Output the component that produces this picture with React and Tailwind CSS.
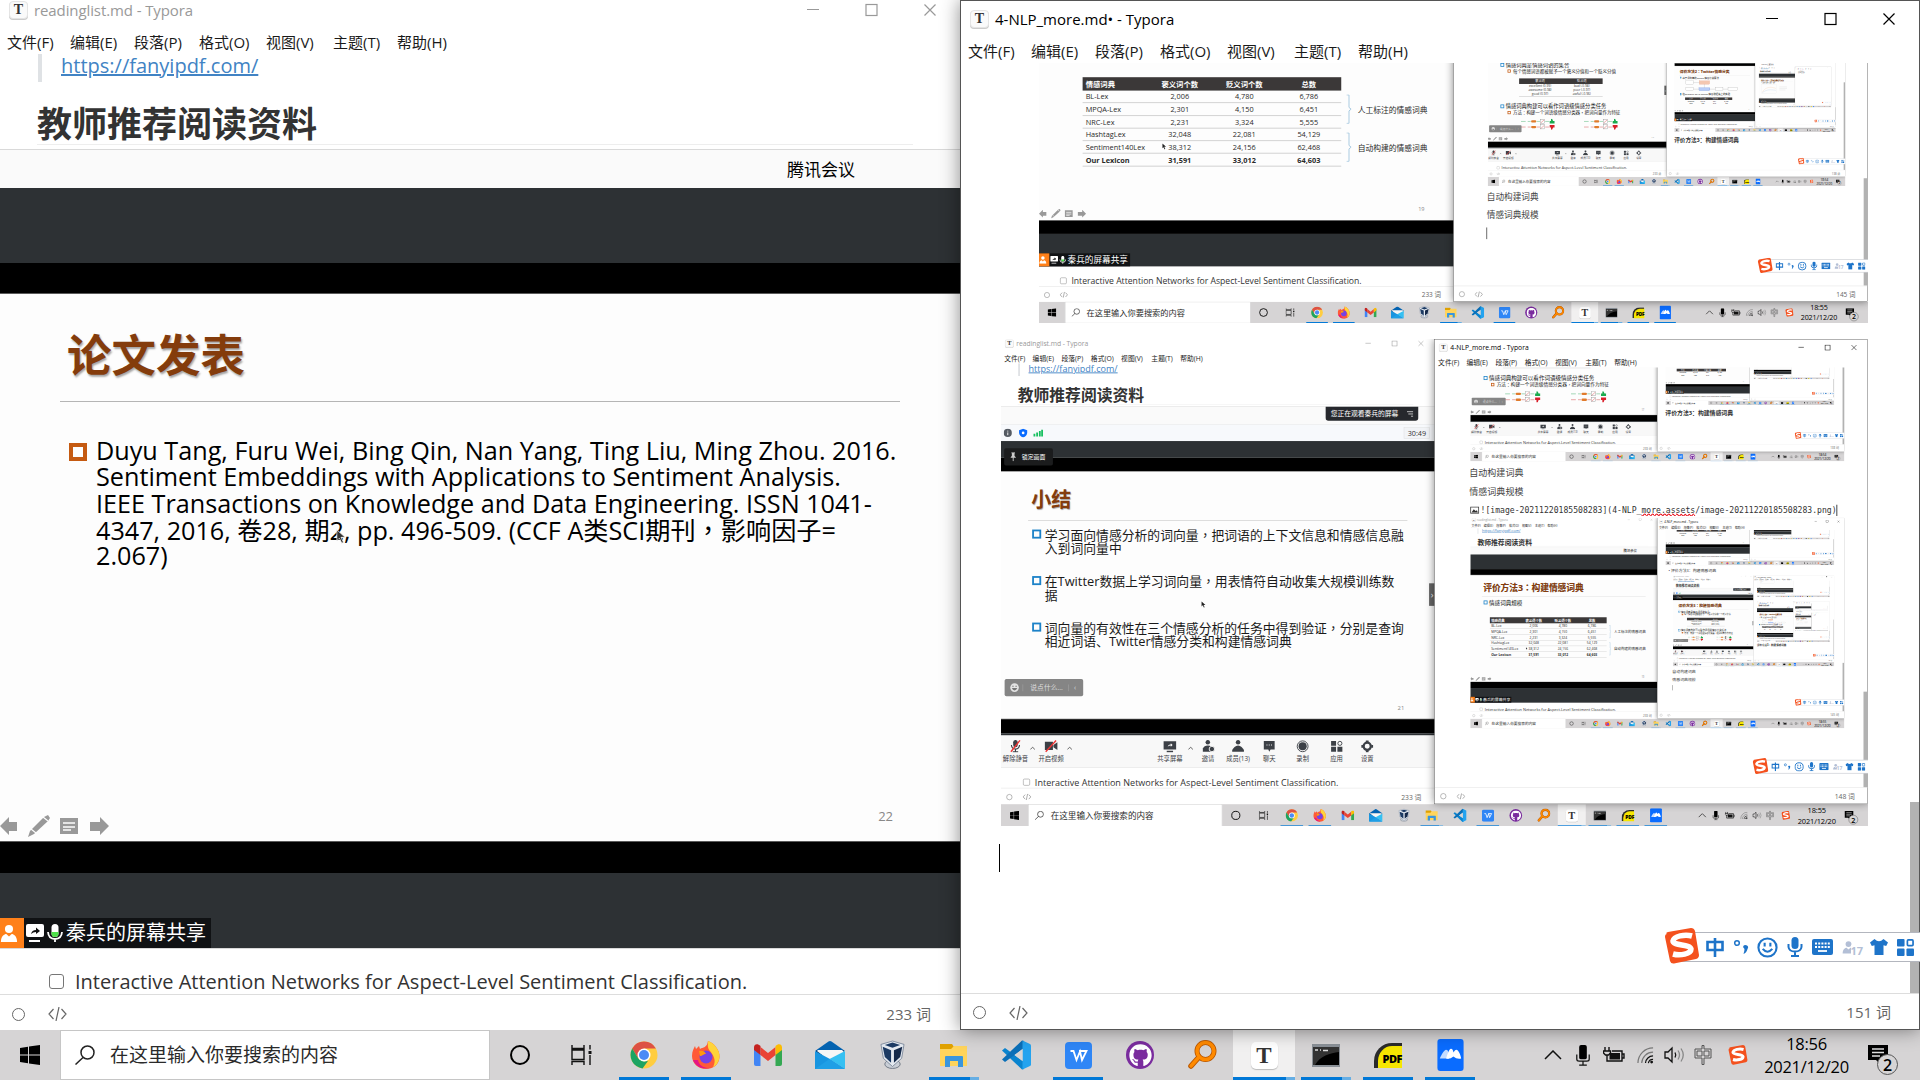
import React from "react";
import { FaGithub } from "react-icons/fa";

/* ---------- small shared icons ---------- */

const TyporaIcon = ({ big }) => (
  <div
    className={
      big
        ? "flex h-[27px] w-[27px] items-center justify-center rounded-[5px] bg-white font-['Liberation_Serif',serif] text-[23px] leading-none font-bold text-[#333] shadow-[0_1px_1px_#bbb]"
        : "flex h-[18px] w-[19px] items-center justify-center rounded-[4px] border border-[#e4e4e4] bg-[#fafafa] font-['Liberation_Serif',serif] text-[14px] leading-none font-bold text-[#333] shadow-[0_1px_0_#ccc]"
    }
  >
    T
  </div>
);

const SogouLogo = ({ className }) => (
  <svg viewBox="0 0 36 36" className={className}>
    <path d="M3 6 Q1 5 4 4 L27 0 Q30 0 31 3 L35 27 Q35 30 32 31 L10 35.500 Q7 36 6 33 L1 9 Q1 6 3 6Z" fill="#f4511e" />
    <path d="M28 8 C21 6 10 8 9 13 C9 18 26 16 27 21 C27 26 16 28 9 26" fill="none" stroke="#fff" strokeWidth="5.500" />
  </svg>
);

const PersonIcon = ({ className }) => (
  <svg viewBox="0 0 20 20" className={className} fill="currentColor">
    <circle cx="10" cy="5.500" r="4.500" />
    <path d="M1 20 C1 13 5 11 7 11 L10 14 L13 11 C15 11 19 13 19 20Z" />
  </svg>
);

const ChromeIcon = () => (
  <svg viewBox="0 0 28 28" className="h-7 w-7">
    <circle cx="14" cy="14" r="13.500" fill="#ffcd40" />
    <path d="M14 .500 A13.500 13.500 0 0 1 25.900 7.500 L14 7.500 L8 17 L2.200 7.500 A13.500 13.500 0 0 1 14 .500Z" fill="#dd5144" />
    <path d="M2.200 7.500 L8.300 17.500 L14 20.500 L18 20 L12.500 27.400 A13.500 13.500 0 0 1 2.200 7.500Z" fill="#1da462" />
    <circle cx="14" cy="14" r="6.500" fill="#fff" />
    <circle cx="14" cy="14" r="5" fill="#4c8bf5" />
  </svg>
);
const FirefoxIcon = () => (
  <svg viewBox="0 0 30 30" className="h-[30px] w-[30px]">
    <path d="M17 1 C23 3 29 10 28.500 17 C28 25 22 29 15 29 C7 29 1 23 1 16 C1 11 3 8 4 6 L5 9 L8 6 L9 9 C12 7 16 8 17 1Z" fill="#ff5a36" />
    <path d="M17 1 C23 3 29 10 28.500 17 C28 22 25 26 22 27 C26 20 22 15 19 11 C16 8 17 4 17 1Z" fill="#ffd43a" />
    <path d="M2 20 C5 27 12 30 20 27.500 C14 29 8 26 7 20Z" fill="#e31587" />
    <circle cx="15" cy="17" r="6.500" fill="#7542e5" />
    <path d="M8 11 C11 10 14 11 15 14 C12 14 12 16 9 16Z" fill="#ff980e" />
  </svg>
);
const GmailIcon = () => (
  <svg viewBox="0 0 28 22" className="h-[22px] w-7">
    <path d="M0 3 V20 Q0 22 2 22 H6.500 V10Z" fill="#4285f4" />
    <path d="M28 3 V20 Q28 22 26 22 H21.500 V10Z" fill="#34a853" />
    <path d="M6.500 3 L14 9 L21.500 3 V11 L14 17 L6.500 11Z" fill="#ea4335" />
    <path d="M0 3.500 C0 0 3.500 -1 6.500 2 V11 L0 6Z" fill="#c5221f" />
    <path d="M28 3.500 C28 0 24.500 -1 21.500 2 V11 L28 6Z" fill="#fbbc04" />
  </svg>
);
const MailIcon = () => (
  <svg viewBox="0 0 30 28" className="h-7 w-[30px]">
    <path d="M0 10 L13.500 .500 Q15 -.500 16.500 .500 L30 10Z" fill="#0362b0" />
    <path d="M1 9.500 H29 V14 H1Z" fill="#083f75" />
    <path d="M3 9 H27 L30 12 L15 20 L2 10Z" fill="#f6f6f6" />
    <path d="M0 10 L14 17.500 L30 28 H0Z" fill="#1895e0" />
    <path d="M30 10 V28 L14.500 18Z" fill="#35c0f2" />
    <path d="M0 28 L14.500 18 L30 28Z" fill="#1f9fe6" />
  </svg>
);
const VBoxIcon = () => (
  <svg viewBox="0 0 26 30" className="-mt-[1px] h-[29px] w-[25px]">
    <ellipse cx="13" cy="25" rx="8" ry="4.500" fill="#c9ced6" stroke="#6f7885" />
    <path d="M13 1 L25 4.500 L22.500 19 L13 27.500 L3.500 19 L1 4.500Z" fill="#e4e9f0" stroke="#6b7a8f" strokeWidth=".8" />
    <path d="M13 2.500 L21 5 L13 8 L5 5Z" fill="#1c3a63" />
    <path d="M2.800 7 L11.500 10.500 V23.500 L5 17.500Z" fill="#1c3a63" />
    <path d="M23.200 7 L14.500 10.500 V23.500 L21 17.500Z" fill="#14294a" />
  </svg>
);
const FolderIcon = () => (
  <svg viewBox="0 0 28 24" className="h-6 w-7">
    <path d="M0 1 H12 L14 4 V8 H0Z" fill="#e0a100" />
    <path d="M0 6 H11 L14 3 H27 V23 H0Z" fill="#ffd45c" />
    <path d="M5 24 V14 Q5 13 6 13 H22 Q23 13 23 14 V24 H18 V18 H10 V24Z" fill="#3a96dd" />
  </svg>
);
const VSCodeIcon = () => (
  <svg viewBox="0 0 30 30" className="h-[30px] w-[30px]">
    <path d="M1 10.500 L4 8 L23 22 V29 L21 29.500Z" fill="#0a84cf" />
    <path d="M1 19.500 L4 22 L23 8 V1 L21 .500Z" fill="#0a6fb8" />
    <path d="M21.500 .500 L29 4 Q30 4.500 30 5.500 V24.500 Q30 25.500 29 26 L21.500 29.500Z" fill="#24a3ef" />
    <path d="M21.500 9 L13.500 15 L21.500 21Z" fill="#d6d5d6" />
  </svg>
);
const WpsIcon = () => (
  <svg viewBox="0 0 27 27" className="h-[27px] w-[27px]">
    <rect width="27" height="27" rx="4" fill="#2f86f6" />
    <path d="M5.500 9 H8.500 L11.500 18 L15 9.500 L17 18 L21.500 9 H14" stroke="#fff" strokeWidth="1.800" fill="none" />
  </svg>
);
const GithubIcon = () => (
  <div className="flex h-7 w-7 items-center justify-center rounded-full bg-[#7a2c9e]">
    <FaGithub className="h-[23px] w-[23px] text-white" />
  </div>
);
const EverythingIcon = () => (
  <svg viewBox="0 0 30 30" className="h-[30px] w-[30px]">
    <path d="M12 17 L4 26" stroke="#b85600" strokeWidth="5.500" strokeLinecap="round" />
    <circle cx="18.500" cy="11" r="8.500" fill="none" stroke="#b85600" strokeWidth="5" />
    <path d="M12 17 L4 26" stroke="#ff8a00" strokeWidth="3.500" strokeLinecap="round" />
    <circle cx="18.500" cy="11" r="8.500" fill="none" stroke="#ff8a00" strokeWidth="3.500" />
  </svg>
);
const TerminalIcon = () => (
  <svg viewBox="0 0 28 23" className="h-[23px] w-7">
    <rect width="28" height="23" fill="#8a9097" />
    <rect x="1" y="3" width="26" height="18" fill="#000" />
    <path d="M1 3 H27 V8 C18 9 8 12 3 21 H1Z" fill="#333" />
    <path d="M3 6 h3 M8 6 h1 M11 6.500 h5" stroke="#ddd" strokeWidth="1.500" />
  </svg>
);
const PdfIcon = () => (
  <div className="flex h-[25px] w-7 items-end justify-end rounded-tl-[18px] border-t-[3px] border-l-[4px] border-[#2b2b2b] bg-[#f6e600]">
    <span className="mb-[2px] font-['Open_Sans',sans-serif] text-[11px] leading-[14px] font-extrabold tracking-[-0.5px] text-black">PDF</span>
  </div>
);
const TencentIcon = () => (
  <svg viewBox="0 0 27 33" className="h-[32px] w-[27px]">
    <rect width="27" height="33" rx="3" fill="#0a6cff" />
    <path d="M2.500 20 C3.500 17 7 11 9 11 C11 11 12 14 12 20 Z" fill="#c5dcff" />
    <path d="M9 20 C10 17 12 10 14 10 C15.500 10 16.500 12 16.500 14 C17.500 12 18.500 11 19.500 11 C21.500 11 24 16 24.500 20 Q20 21 16.500 18 Q13 21 9 20Z" fill="#fff" />
  </svg>
);

/* ---------- taskbar ---------- */

const apps = [
  { id: "chrome", icon: <ChromeIcon />, run: 1 },
  { id: "firefox", icon: <FirefoxIcon />, run: 1 },
  { id: "gmail", icon: <GmailIcon /> },
  { id: "mail", icon: <MailIcon /> },
  { id: "vbox", icon: <VBoxIcon /> },
  { id: "files", icon: <FolderIcon />, run: 2 },
  { id: "code", icon: <VSCodeIcon /> },
  { id: "wps", icon: <WpsIcon />, run: 1 },
  { id: "github", icon: <GithubIcon /> },
  { id: "search", icon: <EverythingIcon /> },
  { id: "typora", icon: <TyporaIcon big />, run: 3 },
  { id: "terminal", icon: <TerminalIcon />, run: 2 },
  { id: "pdf", icon: <PdfIcon />, run: 1 },
  { id: "meeting", icon: <TencentIcon />, run: 1 },
];

const Taskbar = ({ time }) => (
  <div className="flex h-[50px] w-[1920px] bg-[#d6d4d5] text-black">
    <div className="flex w-[60px] items-center justify-center">
      <svg viewBox="0 0 20 20" className="h-5 w-5">
        <path d="M0 3 L8 1.800 V9.500 H0Z M9 1.600 L20 0 V9.500 H9Z M0 10.500 H8 V18.200 L0 17Z M9 10.500 H20 V20 L9 18.400Z" />
      </svg>
    </div>
    <div className="flex h-[50px] w-[430px] items-center border border-[#c6c6c6] bg-white pl-[14px]">
      <svg viewBox="0 0 20 20" className="h-5 w-5" fill="none" stroke="#222" strokeWidth="1.500">
        <circle cx="12.500" cy="7.500" r="6.500" />
        <path d="M8 12.500 L.500 19.500" />
      </svg>
      <span className="ml-[15px] text-[19px] leading-none text-[#2a2a2a]">在这里输入你要搜索的内容</span>
    </div>
    <div className="flex w-[60px] items-center justify-center">
      <div className="h-5 w-5 rounded-full border-[2.5px] border-black" />
    </div>
    <div className="flex w-[63px] items-center justify-center">
      <svg viewBox="0 0 22 20" className="h-5 w-[22px]" fill="none" stroke="#111" strokeWidth="1.400">
        <path d="M1 0 V3.500 H13 V0 M1 5 H13 V14.500 H1Z M1 20 V16.500 H13 V20 M19 0 V4.500 M19 10 V20" />
        <path d="M17.500 7.500 H20.500" strokeWidth="3" />
      </svg>
    </div>
    {apps.map((a) => (
      <div
        key={a.id}
        className={
          a.run === 3
            ? "flex h-[50px] w-[62px] flex-col bg-[#f1f0f0]"
            : "flex h-[50px] w-[62px] flex-col"
        }
      >
        <div className="flex h-[47px] items-center justify-center pt-[3px]">{a.icon}</div>
        {a.run && (
          <div className={a.run === 3 ? "flex h-[3px]" : "mx-[6px] flex h-[3px]"}>
            <div className="flex-1 bg-[#0078d7]" />
            {a.run > 1 && <div className="w-[9px] bg-[#66aee4]" />}
          </div>
        )}
      </div>
    ))}
    <div className="ml-[59px] flex h-[50px] flex-1 items-center">
      <svg viewBox="0 0 18 10" className="h-[10px] w-[26px]" fill="none" stroke="#111" strokeWidth="1.500">
        <path d="M1 9 L9 1 L17 9" />
      </svg>
      <svg viewBox="0 0 16 22" className="ml-[9px] h-[21px] w-4">
        <rect x="4" y="0" width="8" height="15" rx="2" />
        <path d="M1.500 10 V15 Q1.500 17 4 17 H12 Q14.500 17 14.500 15 V10 M8 17 V21 M4 21 H12" fill="none" stroke="#111" strokeWidth="1.300" />
      </svg>
      <svg viewBox="0 0 22 16" className="ml-3 h-4 w-[22px]" fill="none" stroke="#111" strokeWidth="1.400">
        <path d="M2 0 V4 M6 0 V4 M0.500 4 H7.500 V6 L5.500 8 H2.500 L.500 6Z M4 8 V14 H19 V4 H9 M19 7 H21 V11 H19" />
        <rect x="6.500" y="6" width="10.500" height="6.500" fill="#111" stroke="none" />
      </svg>
      <svg viewBox="0 0 18 18" className="ml-3 h-[17px] w-[17px]" fill="none" stroke="#777" strokeWidth="1.300">
        <path d="M1 17 A16 16 0 0 1 17 1 M5 17 A12 12 0 0 1 17 5.500" />
        <path d="M9 17 A8 8 0 0 1 17 9.500 M12 17 A5 5 0 0 1 17 13" stroke="#111" />
        <circle cx="15.500" cy="16" r="1.500" fill="#111" stroke="none" />
      </svg>
      <svg viewBox="0 0 21 18" className="ml-[10px] h-[18px] w-[21px]" fill="none" stroke="#111" strokeWidth="1.300">
        <path d="M1 6 H4 L8 2 V16 L4 12 H1Z M11 6.500 Q12.500 9 11 11.500" />
        <path d="M14 4.500 Q17 9 14 13.500 M17 2.500 Q21.500 9 17 15.500" stroke="#888" />
      </svg>
      <svg viewBox="0 0 18 20" className="ml-[9px] h-[22px] w-[18px]" fill="none" stroke="#555" strokeWidth="1">
        <path d="M1 4 H8 V.500 H10 V4 H17 V13 H10 V19.500 H8 V13 H1Z M3 6 H8 V11 H3Z M10 6 H15 V11 H10Z" />
      </svg>
      <SogouLogo className="ml-[16px] h-5 w-5" />
      <div className="ml-[12px] flex w-[93px] flex-col items-center text-[16.500px] leading-[23px] tracking-[-0.3px] whitespace-nowrap">
        <span>{time}</span>
        <span>2021/12/20</span>
      </div>
      <div className="relative ml-[15px] h-[50px] w-8">
        <svg viewBox="0 0 20 21" className="mt-[15px] h-[21px] w-5">
          <path d="M0 0 H20 V15 H13 L13 20 L8 15 H0Z" />
          <path d="M4 4 H16 M4 7.500 H16 M4 11 H12" stroke="#ddd" strokeWidth="1.300" />
        </svg>
        <div className="absolute top-[24px] left-[9px] flex h-[21px] w-[21px] items-center justify-center rounded-full border border-[#555] bg-[#d6d4d5] text-[16px] leading-none font-semibold">
          2
        </div>
      </div>
    </div>
  </div>
);

/* ---------- Sogou input bar ---------- */

const ImeBar = () => (
  <div className="absolute top-[928px] left-[1664px] flex h-[36px] w-[256px] items-center">
    <div className="absolute top-[4px] right-0 h-[30px] w-[240px] border-y border-[#b3b6be] bg-white" />
    <SogouLogo className="relative h-[36px] w-[36px]" />
    <div className="relative flex flex-1 items-center justify-between pt-[2px] pr-[6px] pl-[6px] text-[#1e74c9]">
      <svg viewBox="0 0 18 20" className="h-5 w-[18px]" fill="none" stroke="currentColor" strokeWidth="2.600">
        <path d="M1.500 5 H16.500 V13 H1.500Z M9 1 V20" />
      </svg>
      <svg viewBox="0 0 16 18" className="h-[18px] w-4" fill="currentColor">
        <circle cx="4" cy="5" r="2.300" fill="none" stroke="currentColor" strokeWidth="1.500" />
        <path d="M10 9 a2.500 2.500 0 1 1 4.500 2 q-1 4 -4 5 q1 -3 1 -5Z" />
      </svg>
      <svg viewBox="0 0 22 22" className="h-[21px] w-[21px]" fill="none" stroke="currentColor" strokeWidth="2.200">
        <circle cx="11" cy="11" r="9.500" />
        <path d="M6 12.500 Q11 18.500 16 12.500 M8 6 V10 M14 6 V10" />
      </svg>
      <svg viewBox="0 0 16 20" className="h-5 w-4" fill="currentColor">
        <rect x="4.500" y="0" width="7" height="12" rx="3.500" />
        <path d="M1.500 7 V10 Q2 14.500 8 14.500 Q14 14.500 14.500 10 V7 M8 14 V19 M4 19 H12" fill="none" stroke="currentColor" strokeWidth="2" />
      </svg>
      <svg viewBox="0 0 21 16" className="h-4 w-[21px]">
        <rect width="21" height="16" rx="2" fill="currentColor" />
        <path d="M3 4.500 H18 M3 8 H18" stroke="#fff" strokeWidth="2" strokeDasharray="2 1.200" />
        <path d="M6 12 H15" stroke="#fff" strokeWidth="1.800" />
      </svg>
      <div className="flex w-5 items-end text-[#b3bfd6]">
        <PersonIcon className="h-[18px] w-[13px] shrink-0" />
        <span className="-ml-[4px] bg-white text-[11px] leading-none font-bold">17</span>
      </div>
      <svg viewBox="0 0 20 18" className="h-[18px] w-[18px]" fill="currentColor">
        <path d="M5 0 Q10 5 15 0 L20 4 L18 8 L15 7 V18 H5 V7 L2 8 L0 4Z" />
      </svg>
      <svg viewBox="0 0 18 18" className="h-[17px] w-[17px]" fill="currentColor">
        <rect width="8" height="8" rx="1" />
        <rect y="10" width="8" height="8" rx="1" />
        <rect x="10" y="10" width="8" height="8" rx="1" />
        <rect x="11" y="1" width="6" height="6" rx="1" fill="none" stroke="currentColor" strokeWidth="1.800" />
      </svg>
    </div>
  </div>
);

/* ---------- window furniture ---------- */

const WindowButtons = ({ className }) => (
  <svg viewBox="0 0 132 14" className={className} fill="none" stroke="currentColor" strokeWidth="1.200">
    <path d="M1 6.500 H13 M118.500 1.500 L129.500 12.500 M129.500 1.500 L118.500 12.500" />
    <rect x="60" y="1.500" width="11" height="11" />
  </svg>
);

const MenuBar = () => (
  <div className="flex text-[15px] leading-5 whitespace-nowrap text-[#1a1a1a]">
    <span className="w-[63px]">文件(F)</span>
    <span className="w-[64px]">编辑(E)</span>
    <span className="w-[65px]">段落(P)</span>
    <span className="w-[67px]">格式(O)</span>
    <span className="w-[67px]">视图(V)</span>
    <span className="w-[64px]">主题(T)</span>
    <span>帮助(H)</span>
  </div>
);

const StatusBar = ({ words, className }) => (
  <div className={className}>
    <div className="h-[13px] w-[13px] rounded-full border border-[#666]" />
    <svg viewBox="0 0 19 14" className="ml-[23px] h-[14px] w-[19px]" fill="none" stroke="#666" strokeWidth="1.200">
      <path d="M5.500 2 L1 7 L5.500 12 M13.500 2 L18 7 L13.500 12 M11 0 L8 14" />
    </svg>
    <span className="ml-auto text-[15px] leading-none text-[#666]">{words} 词</span>
  </div>
);

/* ---------- slides ---------- */

/* Sets full-width commas and colons in the middle of their cell. */
const Mid = ({ children }) =>
  children.split(/([，：])/).map((part, i) =>
    i % 2 ? (
      <span key={i} lang="zh-TW" className="font-['Noto_Sans_CJK_TC',sans-serif]">
        {part}
      </span>
    ) : (
      part
    ),
  );

const Slide = ({ title, page, hideNav, children }) => (
  <div className="flex h-[549px] flex-col border-y border-[#5a5a5a] bg-[#fdfdfd]">
    <div className="h-[107px] pt-[39px] pl-[67px] text-[44.500px] leading-[44px] font-bold whitespace-nowrap text-[#843c0c] [text-shadow:1px_2px_2px_rgba(0,0,0,.35)]">
      <Mid>{title}</Mid>
    </div>
    <div className="ml-[60px] h-px w-[840px] bg-[#b5b5b5]" />
    <div className="flex-1 pl-[69px]">{children}</div>
    <div className="flex h-[40px]">
      <div className={hideNav ? "invisible" : "flex h-[50px] items-center text-[#999]"}>
        <svg viewBox="0 0 110 22" className="h-[22px] w-[110px]" fill="currentColor">
          <path d="M0 11 L9 2 V7 H17 V16 H9 V20Z" />
          <path d="M28 22 L30 16 L44 2 L48 0 L50 3 L48 6 L34 19Z" />
          <path d="M31 14 L36 18 M43 2 L48 6" stroke="#fdfdfd" strokeWidth="1.200" />
          <path d="M60 3 H78 V19 H60Z" />
          <path d="M63 8 H75 M63 12 H75 M63 15 H71" stroke="#fdfdfd" strokeWidth="1.600" />
          <path d="M109 11 L100 2 V7 H90 V16 H100 V20Z" />
        </svg>
      </div>
      <span className="mt-[7px] mr-[68px] ml-auto text-[13px] leading-4 text-[#888]">{page}</span>
    </div>
  </div>
);

const Box = ({ orange, small }) => (
  <div
    className={
      (small ? "mt-[6px] mr-3 h-[17px] w-[17px] border-4 " : "mt-[5px] mr-[8px] h-5 w-5 border-[4.5px] ") +
      "shrink-0 " +
      (orange ? "border-[#c55a11]" : "border-[#1c82c8]")
    }
  />
);

const Bullet = ({ lines, className }) => (
  <div className={"flex " + className}>
    <Box />
    <div className="text-[28.400px] leading-[31px] whitespace-nowrap text-[#1a1a1a]">
      {lines.map((l) => (
        <div key={l} className="h-[31px]">
          <Mid>{l}</Mid>
        </div>
      ))}
    </div>
  </div>
);

const SubBullet = ({ text, className }) => (
  <div className={"flex pl-[38px] text-[24px] leading-[28px] whitespace-nowrap text-[#1a1a1a] " + className}>
    <Box orange small />
    <div className="h-[28px]">
      <Mid>{text}</Mid>
    </div>
  </div>
);

const citation = [
  "Duyu Tang, Furu Wei, Bing Qin, Nan Yang, Ting Liu, Ming Zhou. 2016.",
  "Sentiment Embeddings with Applications to Sentiment Analysis.",
  "IEEE Transactions on Knowledge and Data Engineering. ISSN 1041-",
  "4347, 2016, 卷28, 期2, pp. 496-509. (CCF A类SCI期刊，影响因子=",
  "2.067)",
];

const PaperSlide = () => (
  <Slide title="论文发表" page="22">
    <div className="flex pt-[35px]">
      <div className="mt-[6px] mr-[9px] h-[18px] w-[18px] shrink-0 border-4 border-[#c55a11]" />
      <div className="text-[25.200px] leading-[26.300px] whitespace-nowrap text-black">
        {citation.map((l) => (
          <div key={l} className="h-[26.300px]">
            <Mid>{l}</Mid>
          </div>
        ))}
      </div>
    </div>
  </Slide>
);

const SummarySlide = () => (
  <Slide title="小结" page="21" hideNav>
    <Bullet className="pt-[15px]" lines={["学习面向情感分析的词向量，把词语的上下文信息和情感信息融", "入到词向量中"]} />
    <Bullet className="pt-[41px]" lines={["在Twitter数据上学习词向量，用表情符自动收集大规模训练数", "据"]} />
    <Bullet className="pt-[41px]" lines={["词向量的有效性在三个情感分析的任务中得到验证，分别是查询", "相近词语、Twitter情感分类和构建情感词典"]} />
  </Slide>
);

const lexicons = [
  ["BL-Lex", "2,006", "4,780", "6,786"],
  ["MPQA-Lex", "2,301", "4,150", "6,451"],
  ["NRC-Lex", "2,231", "3,324", "5,555"],
  ["HashtagLex", "32,048", "22,081", "54,129"],
  ["Sentiment140Lex", "38,312", "24,156", "62,468"],
  ["Our Lexicon", "31,591", "33,012", "64,603"],
];

const Brace = () => (
  <svg viewBox="0 0 12 68" className="h-[68px] w-3" fill="none" stroke="#9cc3dc" strokeWidth="2">
    <path d="M0 1 H6 V30 L11 34 L6 38 V67 H0" />
  </svg>
);

const LexiconSizeSlide = () => (
  <Slide title="评价方法3：构建情感词典" page="19">
    <Bullet className="pt-[17px]" lines={["情感词典规模"]} />
    <div className="mt-[60px] ml-[32px] flex">
      <div className="w-[599px] text-[17px] leading-none text-[#2a2a2a]">
        <div className="grid h-[31px] grid-cols-[150px_150px_149px_150px] items-center bg-[#3b3838] text-center font-bold text-white">
          <span className="pl-[7px] text-left">情感词典</span>
          <span>褒义词个数</span>
          <span>贬义词个数</span>
          <span>总数</span>
        </div>
        {lexicons.map((r, i) => (
          <div
            key={r[0]}
            className={
              "grid h-[29.300px] grid-cols-[150px_150px_149px_150px] items-center border-b-2 border-[#ccc] text-center " +
              (i === 5 ? "font-bold" : "")
            }
          >
            <span className="pl-[7px] text-left">{r[0]}</span>
            <span className="relative">
              {r[1]}
              {i === 4 && (
                <svg viewBox="0 0 12 18" className="absolute top-0 left-[34px] h-[15px] w-[10px]">
                  <path d="M1 1 V14 L4 11 L7 17 L9 16 L6 10 H11Z" fill="#222" />
                </svg>
              )}
            </span>
            <span>{r[2]}</span>
            <span>{r[3]}</span>
          </div>
        ))}
      </div>
      <div className="ml-[12px] flex flex-col gap-[20px] pt-[40px]">
        <Brace />
        <Brace />
      </div>
      <div className="ml-[14px] flex flex-col gap-[70px] pt-[66px] text-[18px] leading-[18px] whitespace-nowrap text-[#2a2a2a]">
        <span>人工标注的情感词典</span>
        <span>自动构建的情感词典</span>
      </div>
    </div>
  </Slide>
);

const Flow = () => (
  <svg viewBox="0 0 190 58" className="h-[58px] w-[190px]" fill="none" strokeWidth="2">
    {[14, 44].map((y, i) => (
      <g key={y}>
        <path d={`M0 ${y} H25 M36 ${y} H52 M84 ${y} H102 M130 ${y} H150`} stroke={i ? "#c22" : "#1b9e4b"} />
        <rect x="54" y={y - 6} width="28" height="12" rx="6" fill="#e07b2c" stroke="none" />
        <rect x="104" y={y - 12} width="22" height="22" stroke="#888" />
        <path d={`M106 ${y + 8} L124 ${y - 8}`} stroke="#d33" />
        <path
          d={i ? `M154 ${y - 11} h26 v13 h-8 l-5 12 h-6 v-12 h-7z` : `M154 ${y + 11} h26 v-13 h-8 l-5 -12 h-6 v12 h-7z`}
          fill={i ? "#d91f2a" : "#1bab4f"}
        />
      </g>
    ))}
  </svg>
);

const LexiconTaskSlide = () => (
  <Slide title="评价方法3：构建情感词典" page="17">
    <Bullet className="pt-[13px]" lines={["情感词典是情感词语的集合"]} />
    <SubBullet className="pt-[2px]" text="每个情感词语都被赋予一个褒义分值和一个贬义分值" />
    <div className="mt-[26px] ml-[100px] w-[448px] border-b-2 border-[#aaa] pb-1 text-center text-[17px] leading-[21px] text-[#333]">
      <div className="grid h-[30px] grid-cols-2 items-center bg-[#3b3838] text-white">
        <span>褒义词</span>
        <span>贬义词</span>
      </div>
      <div className="grid grid-cols-2">
        <span>excellent (0.99)</span>
        <span>bad (-0.98)</span>
        <span>awesome (0.98)</span>
        <span>poor (-0.97)</span>
        <span>good (0.97)</span>
        <span>awful (-0.96)</span>
      </div>
    </div>
    <Bullet className="pt-[36px]" lines={["情感词典构建可以看作词语级情感分类任务"]} />
    <SubBullet className="pt-[3px]" text="方法：构建一个词语级情感分类器，把词向量作为特征" />
    <div className="flex gap-[148px] pt-[20px] pl-[110px]">
      <Flow />
      <Flow />
    </div>
  </Slide>
);

const TwitterSlide = () => (
  <Slide title="评价方法2：Twitter情感分类" page="14">
    <Bullet className="pt-[15px]" lines={["基于词向量的Twitter情感分类算法"]} />
    <svg viewBox="0 0 640 130" className="mt-4 ml-[60px] h-[130px] w-[640px]" fill="#fff" stroke="#777" strokeWidth="2">
      <rect x="10" y="5" width="90" height="44" />
      <rect x="170" y="5" width="120" height="40" fill="#f4c7b0" stroke="#d9643a" />
      <rect x="10" y="88" width="90" height="34" />
      <rect x="165" y="88" width="130" height="34" fill="#b9cdf8" stroke="#3763c9" />
      <rect x="360" y="88" width="90" height="34" />
      <rect x="510" y="88" width="110" height="34" />
      <path d="M100 26 H170 M100 105 H165 M230 45 V88 M295 105 H360 M450 105 H510" fill="none" />
    </svg>
    <Bullet className="pt-[22px]" lines={["在SemEval 2013 Twitter情感数据集上的实验"]} />
    <div className="mt-5 ml-[60px] w-[560px] text-center text-[20px] leading-[30px]">
      <div className="grid grid-cols-4 bg-[#3b3838] text-white">
        <span>方法</span>
        <span>正/负类</span>
        <span>三类分类</span>
        <span>总数</span>
      </div>
      <div className="grid grid-cols-4">
        <span>Training</span>
        <span>2,642</span>
        <span>994</span>
        <span>3,436</span>
        <span>Dev</span>
        <span>408</span>
        <span>219</span>
        <span>492</span>
      </div>
    </div>
  </Slide>
);

const CurveSlide = () => (
  <Slide title="评价方法1：查询情感相近词语" page="12">
    <Bullet className="pt-[17px]" lines={["度量词向量与情感的一致性"]} />
    <svg viewBox="0 0 700 280" className="mt-4 h-[280px] w-[700px]" fill="none" stroke="#bbb" strokeWidth="2">
      <rect x="20" y="10" width="380" height="230" />
      <path d="M30 210 C120 60 260 60 390 110" stroke="#e07b2c" strokeWidth="3" />
      <path d="M30 225 C140 130 260 140 390 160" stroke="#3d7ec2" strokeWidth="3" />
      <path d="M480 70 H680 M480 110 H680 M480 150 H640" stroke="#888" strokeWidth="3" />
    </svg>
  </Slide>
);

/* ---------- meeting window ---------- */

const PlainMeeting = ({ slide }) => (
  <div className="h-[800px] shrink-0 border-y border-[#d9d9d9] bg-[#fafafa]">
    <div className="flex h-[38px] items-center pl-[787px] text-[17px] leading-none text-black">腾讯会议</div>
    <div className="h-[75px] bg-[#2d3134]" />
    <div className="h-[30px] bg-black" />
    {slide}
    <div className="h-[31px] bg-black" />
    <div className="flex h-[75px] items-end bg-[#2d3134]">
      <div className="flex h-[30px] w-[211px] items-center bg-[#101214] text-white">
        <div className="flex h-[30px] w-6 items-center bg-[#ff8019]">
          <PersonIcon className="h-[18px] w-[18px]" />
        </div>
        <svg viewBox="0 0 18 18" className="ml-[2px] h-[18px] w-[18px]">
          <rect width="18" height="13" rx="2" fill="#fff" />
          <path d="M3 17 H14" stroke="#fff" strokeWidth="2" />
          <path d="M5 10 Q6 6 10 6 V3.500 L14 7 L10 10 V8 Q7 8 5 10Z" fill="#111" />
        </svg>
        <svg viewBox="0 0 16 19" className="ml-[3px] h-[19px] w-4">
          <rect x="4.500" y="0" width="7" height="13" rx="3.500" fill="#fff" />
          <path d="M4.500 8 H11.500 V9.500 A3.500 3.500 0 0 1 4.500 9.500Z" fill="#4ee04a" />
          <path d="M1 8 Q1.500 15 8 15 Q14.500 15 15 8 M8 15 V18" fill="none" stroke="#fff" strokeWidth="1.800" />
        </svg>
        <span className="ml-[3px] text-[20px] leading-none whitespace-nowrap">秦兵的屏幕共享</span>
      </div>
    </div>
  </div>
);

const ToolItem = ({ label, className, children }) => (
  <div className={"flex shrink-0 flex-col items-center gap-[5px] whitespace-nowrap " + className}>
    <svg viewBox="0 0 30 28" className="h-7 w-[30px]" fill="currentColor">
      {children}
    </svg>
    <span>{label}</span>
  </div>
);

const Caret = () => (
  <svg viewBox="0 0 12 8" className="mt-[14px] h-2 w-3 shrink-0" fill="none" stroke="#444" strokeWidth="1.800">
    <path d="M1 7 L6 2 L11 7" />
  </svg>
);

const MeetingToolbar = () => (
  <div className="flex h-[70px] bg-[#f8f8f8] pt-[10px] text-[14px] leading-[18px] text-[#3c4046]">
    <ToolItem label="解除静音" className="w-[64px]">
      <rect x="10" y="0" width="10" height="16" rx="5" />
      <path d="M6 11 Q7 20 15 20 Q23 20 24 11 M15 20 V26 M9 26 H21" fill="none" stroke="currentColor" strokeWidth="2.500" />
      <path d="M5 26 L25 1" stroke="#e33" strokeWidth="3" />
    </ToolItem>
    <Caret />
    <ToolItem label="开启视频" className="w-[70px]">
      <path d="M1 4 H19 V22 H1Z M20 11 L29 5 V22 L20 16Z" />
      <path d="M3 26 L26 1" stroke="#e33" strokeWidth="3" />
    </ToolItem>
    <Caret />
    <ToolItem label="共享屏幕" className="ml-[176px] w-[80px]">
      <path d="M1 3 H29 V21 H1Z M8 24 H22 V27 H8Z" />
      <path d="M10 15 Q12 9 17 10 V7 L21 11 L17 15 V12 Q13 12 10 15Z" fill="#fff" />
    </ToolItem>
    <Caret />
    <ToolItem label="邀请" className="w-[65px]">
      <circle cx="14" cy="5" r="5" />
      <path d="M3 26 V19 Q6 12 14 12 Q19 12 21 14 V26Z" />
      <circle cx="23" cy="20" r="6" stroke="#f8f8f8" strokeWidth="2" />
    </ToolItem>
    <ToolItem label="成员(13)" className="w-[68px]">
      <circle cx="15" cy="5" r="5" />
      <path d="M2 26 V22 Q6 14 15 12 Q24 14 28 22 V26Z" />
    </ToolItem>
    <ToolItem label="聊天" className="w-[70px]">
      <path d="M3 2 H27 V21 H18 L15 26 L13 21 H3Z" />
      <path d="M9 11 h2 M14 11 h2 M19 11 h2" stroke="#fff" strokeWidth="2.500" />
    </ToolItem>
    <ToolItem label="录制" className="w-[78px]">
      <circle cx="15" cy="14" r="12" fill="none" stroke="currentColor" strokeWidth="2" />
      <circle cx="15" cy="14" r="9" />
    </ToolItem>
    <ToolItem label="应用" className="w-[72px]">
      <path d="M3 2 H14 V13 H3Z M3 15 H14 V26 H3Z M17 15 H28 V26 H17Z" />
      <circle cx="22.500" cy="7.500" r="4.500" fill="none" stroke="currentColor" strokeWidth="2" />
    </ToolItem>
    <ToolItem label="设置" className="w-[64px]">
      <circle cx="15" cy="14" r="8" fill="none" stroke="currentColor" strokeWidth="5" />
      <path d="M12 1 H18 V5 H12Z M12 23 H18 V27 H12Z M2 11 H6 V17 H2Z M24 11 H28 V17 H24Z" />
    </ToolItem>
  </div>
);

const ActiveMeeting = ({ slide }) => (
  <div className="relative h-[800px] shrink-0 border-y border-[#d9d9d9] bg-[#fafafa]">
    <div className="flex h-[39px] justify-end pr-[37px]">
      <div className="flex h-[31px] w-[205px] items-center justify-between rounded-b-md bg-[#26282d] px-[11px] text-[15px] leading-none whitespace-nowrap text-white">
        <span>您正在观看秦兵的屏幕</span>
        <svg viewBox="0 0 14 14" className="h-[14px] w-[14px]" fill="none" stroke="#ddd" strokeWidth="1.800">
          <path d="M0 2 H14 M3 7 H14 M9 12 H14" />
        </svg>
      </div>
    </div>
    <div className="flex h-[37px] items-center border-t border-[#e5e5e5] bg-[#f7f9fc] pr-[11px] pl-[6px]">
      <svg viewBox="0 0 90 20" className="h-5 w-[90px]">
        <circle cx="9" cy="10" r="9" fill="#555b63" />
        <path d="M9 5 V7 M9 9 V15" stroke="#fff" strokeWidth="2" />
        <path d="M43 1 L52 4 V10 Q51 17 43 20 Q35 17 34 10 V4Z" fill="#0a6cff" />
        <circle cx="43" cy="10" r="3" fill="#fff" />
        <path d="M68 18 V12 M74 18 V9 M80 18 V6 M85 18 V3" stroke="#18c060" strokeWidth="4" />
      </svg>
      <div className="ml-auto flex h-[25px] w-[58px] items-center justify-center border border-[#ddd] bg-[#f2f4f7] text-[16px] leading-none text-[#333]">
        30:49
      </div>
    </div>
    <div className="h-[37px] bg-[#2d3134]" />
    <div className="h-[30px] bg-black" />
    {slide}
    <div className="h-[31px] bg-black" />
    <div className="h-[5px] bg-[#2d3134]" />
    <MeetingToolbar />
    <div className="absolute top-[92px] left-[7px] flex h-[38px] w-[108px] items-center rounded bg-[#1b1c1d] pl-[14px] text-[13px] leading-none text-white">
      <svg viewBox="0 0 12 20" className="mr-[13px] h-5 w-3" fill="#ccc">
        <path d="M2 0 H10 V2 H9 V8 L12 11 V12 H7 V20 H5 V12 H0 V11 L3 8 V2 H2Z" />
      </svg>
      锁定画面
    </div>
    <div className="absolute top-[603px] left-[8px] flex h-[38px] w-[174px] items-center rounded bg-[#858585] pl-[12px] text-[15px] leading-none whitespace-nowrap text-[#ddd]">
      <svg viewBox="0 0 20 20" className="h-5 w-5">
        <circle cx="10" cy="10" r="9.500" fill="#e4e4e4" />
        <path d="M4 11 H16 Q14 16.500 10 16.500 Q6 16.500 4 11Z M5 6 h3 v2 h-3z M12 6 h3 v2 h-3z" fill="#777" />
      </svg>
      <span className="ml-2 border-l border-[#aaa] pl-4">说点什么...</span>
      <span className="ml-3 border-l border-[#aaa] pl-3">‹</span>
    </div>
    <div className="absolute top-[391px] right-0 flex h-[50px] w-[13px] items-center justify-center bg-[#666] text-[20px] leading-none text-white">
      ›
    </div>
  </div>
);

/* ---------- windows ---------- */

const ReadingWindow = ({ children }) => (
  <div className="absolute top-0 left-0 flex h-[1030px] w-[961px] flex-col overflow-hidden bg-white">
    <div className="flex h-[20px] shrink-0 items-center pl-[9px] text-[#999]">
      <TyporaIcon />
      <span className="ml-[6px] text-[15px] leading-5 tracking-[-0.1px] whitespace-nowrap text-[#999]">readinglist.md - Typora</span>
      <WindowButtons className="mr-[23px] ml-auto h-[14px] w-[132px]" />
    </div>
    <div className="h-[34px] shrink-0 pt-[12px] pl-[7px]">
      <MenuBar />
    </div>
    <div className="ml-[38px] h-[28px] shrink-0 border-l-4 border-[#dfe2e5] pl-[19px] text-[20px] leading-[24px] text-[#4183c4] underline">
      https://fanyipdf.com/
    </div>
    <div className="mr-[48px] ml-[37px] h-[67px] shrink-0">
      <h2 className="flex h-[63px] items-center border-b border-[#eee] pt-[21px] text-[35px] leading-none font-bold whitespace-nowrap text-[#333]">
        教师推荐阅读资料
      </h2>
    </div>
    {children}
    <div className="flex h-[45px] shrink-0 items-center pt-[21px] pl-[49px]">
      <div className="-mt-px h-[15px] w-[15px] shrink-0 rounded-[3px] border border-[#767676]" />
      <span className="ml-[11px] text-[20px] leading-6 whitespace-nowrap text-[#333]">
        Interactive Attention Networks for Aspect-Level Sentiment Classification.
      </span>
    </div>
    <StatusBar words="233" className="flex h-[36px] shrink-0 items-center border-t border-[#ddd] pt-[3px] pr-[30px] pl-[12px]" />
  </div>
);

const NotesWindow = ({ title, words, thumb, children }) => (
  <div className="absolute top-0 left-[960px] flex h-[1030px] w-[960px] flex-col border border-[#555] bg-white shadow-[0_0_18px_rgba(0,0,0,.45)]">
    <div className="flex h-[35px] items-center pl-[9px] text-black">
      <TyporaIcon />
      <span className="ml-[6px] text-[15px] leading-5 whitespace-nowrap">{title}</span>
      <WindowButtons className="mr-[22px] ml-auto h-[14px] w-[132px]" />
    </div>
    <div className="h-[27px] pt-[5px] pl-[7px]">
      <MenuBar />
    </div>
    <div className="flex h-[930px] overflow-hidden">
      <div className="flex-1">{children}</div>
      <div className="flex h-[930px] w-[9px] flex-col justify-end">
        <div className={"bg-[#b2b2b2] " + thumb} />
      </div>
    </div>
    <StatusBar words={words} className="flex flex-1 items-center border-t border-[#ddd] pt-[2px] pr-[28px] pl-[12px]" />
  </div>
);

const Desktop = ({ time, meeting, notesTitle, words, thumb, children }) => (
  <div className="relative flex h-[1080px] w-[1920px] flex-col justify-end overflow-hidden bg-white font-['Open_Sans','Noto_Sans_CJK_SC',sans-serif]">
    <ReadingWindow>{meeting}</ReadingWindow>
    <NotesWindow title={notesTitle} words={words} thumb={thumb}>
      {children}
    </NotesWindow>
    <ImeBar />
    <Taskbar time={time} />
  </div>
);

/* A screenshot pasted in a note: full width, or narrower inside a list. */
const WideShot = ({ className, children }) => (
  <div className={"ml-[40px] h-[487px] w-[867px] overflow-hidden " + className}>
    <div className="h-[1080px] w-[1920px] origin-top-left scale-[0.45156]">{children}</div>
  </div>
);
const ListShot = ({ className, children }) => (
  <div className={"ml-[78px] h-[466px] w-[829px] overflow-hidden " + className}>
    <div className="h-[1080px] w-[1920px] origin-top-left scale-[0.43177]">{children}</div>
  </div>
);

const Line = ({ children, className }) => (
  <div className={"ml-[76px] text-[20px] leading-[42px] whitespace-nowrap text-[#444] " + className}>{children}</div>
);

const CurveDesktop = () => (
  <Desktop time="18:53" meeting={<PlainMeeting slide={<CurveSlide />} />} notesTitle="4-NLP_more.md - Typora" words="128" thumb="h-[190px]">
    <Line className="pt-10">查询情感相近词语</Line>
    <Line>词向量与情感一致性</Line>
  </Desktop>
);

const TwitterDesktop = () => (
  <Desktop time="18:54" meeting={<PlainMeeting slide={<TwitterSlide />} />} notesTitle="4-NLP_more.md - Typora" words="132" thumb="h-[210px]">
    <WideShot className="-mt-[300px]">
      <CurveDesktop />
    </WideShot>
    <Line>Twitter情感分类</Line>
    <WideShot className="mt-2">
      <CurveDesktop />
    </WideShot>
  </Desktop>
);

const LexiconTaskDesktop = () => (
  <Desktop time="18:54" meeting={<ActiveMeeting slide={<LexiconTaskSlide />} />} notesTitle="4-NLP_more.md - Typora" words="138" thumb="h-[470px]">
    <WideShot className="-mt-[292px]">
      <CurveDesktop />
    </WideShot>
    <WideShot className="mt-[45px]">
      <TwitterDesktop />
    </WideShot>
    <div className="mt-[16px] ml-[40px] text-[30px] leading-[50px] font-bold whitespace-nowrap text-[#333]">
      评价方法3：构建情感词典
    </div>
  </Desktop>
);

const LexiconSizeDesktop = () => (
  <Desktop time="18:55" meeting={<PlainMeeting slide={<LexiconSizeSlide />} />} notesTitle="4-NLP_more.md - Typora" words="145" thumb="h-[249px]">
    <WideShot className="-mt-[307px]">
      <TwitterDesktop />
    </WideShot>
    <div className="ml-[56px] h-[53px] text-[20px] leading-[53px] whitespace-nowrap text-[#333]">• 评价方法3：构建情感词典</div>
    <ListShot>
      <LexiconTaskDesktop />
    </ListShot>
    <Line className="pt-1">自动构建词典</Line>
    <Line>情感词典规模</Line>
    <div className="mt-[8px] ml-[75px] h-[27px] w-[2px] bg-[#555]" />
  </Desktop>
);

const SummaryDesktop = () => (
  <Desktop time="18:55" meeting={<ActiveMeeting slide={<SummarySlide />} />} notesTitle="4-NLP_more.md - Typora" words="148" thumb="h-[212px]">
    <ListShot className="-mt-[258px]">
      <LexiconTaskDesktop />
    </ListShot>
    <Line className="pt-1">自动构建词典</Line>
    <Line>情感词典规模</Line>
    <div className="ml-[78px] flex h-[37px] items-center pt-[3px] font-['DejaVu_Sans_Mono',monospace] text-[17.950px] leading-none whitespace-nowrap text-[#333]">
      <svg viewBox="0 0 20 16" className="mr-[3px] h-4 w-5 shrink-0">
        <rect x="1" y="1" width="18" height="14" fill="none" stroke="#333" strokeWidth="2" />
        <path d="M3 13 L8 6 L12 10 L15 8 L17 13Z" fill="#333" />
      </svg>
      <span>![image-20211220185508283](4-NLP_</span>
      <span className="underline decoration-red-600 decoration-wavy">more.assets</span>
      <span>/image-20211220185508283.png)</span>
      <span className="h-[25px] w-[2px] shrink-0 bg-[#333]" />
    </div>
    <ListShot>
      <LexiconSizeDesktop />
    </ListShot>
  </Desktop>
);

export default function App() {
  return (
    <div className="relative h-[1080px] w-[1920px] overflow-hidden" lang="zh-CN">
      <Desktop time="18:56" meeting={<PlainMeeting slide={<PaperSlide />} />} notesTitle="4-NLP_more.md• - Typora" words="151" thumb="h-[191px]">
        <ListShot className="-mt-[206px]">
          <LexiconSizeDesktop />
        </ListShot>
        <WideShot className="mt-[16px]">
          <SummaryDesktop />
        </WideShot>
        <div className="mt-[18px] ml-[38px] h-[28px] w-px bg-black" />
      </Desktop>
      <svg viewBox="0 0 12 18" className="absolute top-[529px] left-[336px] h-[15px] w-[10px]">
        <path d="M1 1 V14 L4 11 L7 17 L9 16 L6 10 H11Z" fill="#333" stroke="#fff" strokeWidth=".8" />
      </svg>
      <svg viewBox="0 0 12 18" className="absolute top-[601px] left-[1201px] h-[7px] w-[5px]">
        <path d="M1 1 V14 L4 11 L7 17 L9 16 L6 10 H11Z" fill="#222" />
      </svg>
    </div>
  );
}
